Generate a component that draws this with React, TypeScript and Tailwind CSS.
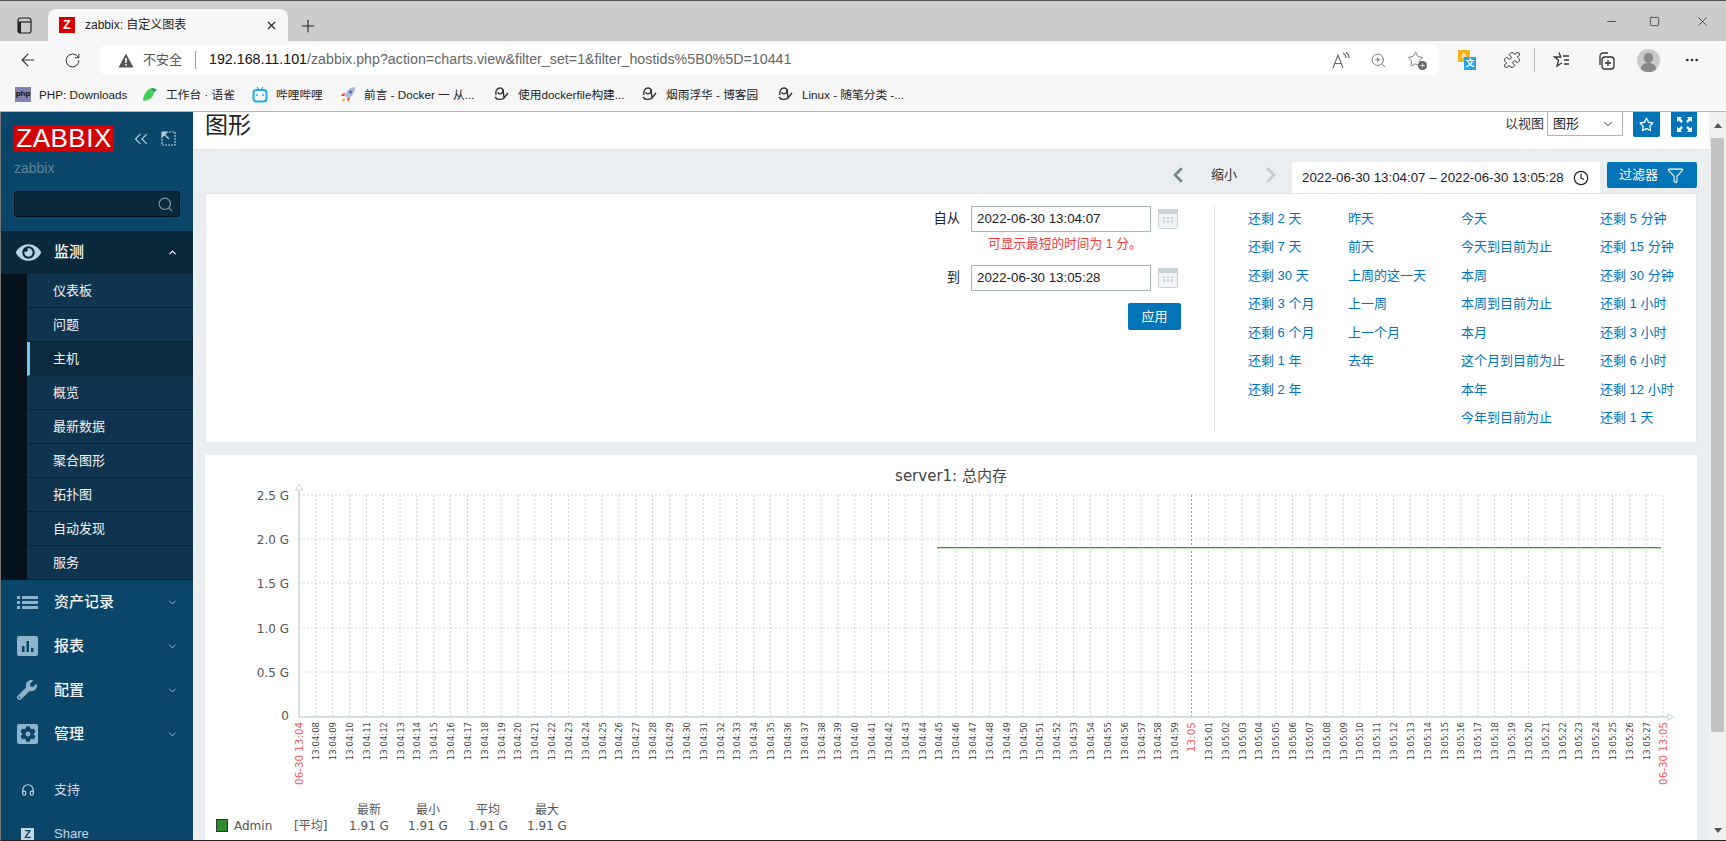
import React from "react";
import { FaEye, FaWrench, FaCog, FaRegStar } from "react-icons/fa";
import {
  ArrowLeft,
  RotateCw,
  Search,
  ChevronUp,
  ChevronDown,
  ChevronLeft,
  ChevronRight,
  ChevronsLeft,
  Headphones,
  Clock,
  Filter,
  Plus,
  X,
  Minus,
  Square,
  ZoomIn,
  MoreHorizontal,
  Puzzle,
  Star,
} from "lucide-react";

const uiFont = "font-['Liberation_Sans','Noto_Sans_CJK_SC',sans-serif]";

const subItems = ["仪表板", "问题", "主机", "概览", "最新数据", "聚合图形", "拓扑图", "自动发现", "服务"];

const linkColumns = [
  { width: "w-[100px]", links: ["还剩 2 天", "还剩 7 天", "还剩 30 天", "还剩 3 个月", "还剩 6 个月", "还剩 1 年", "还剩 2 年"] },
  { width: "w-[113px]", links: ["昨天", "前天", "上周的这一天", "上一周", "上一个月", "去年"] },
  { width: "w-[139px]", links: ["今天", "今天到目前为止", "本周", "本周到目前为止", "本月", "这个月到目前为止", "本年", "今年到目前为止"] },
  { width: "w-[90px]", links: ["还剩 5 分钟", "还剩 15 分钟", "还剩 30 分钟", "还剩 1 小时", "还剩 3 小时", "还剩 6 小时", "还剩 12 小时", "还剩 1 天"] },
];

const BlogIcon = () => (
  <svg width="16" height="16" viewBox="0 0 16 16" fill="none" stroke="#333" strokeWidth="1.400">
    <path d="M2 9C1 5 3 2 6 2c3 0 4 3 2 5-1.500 1.500-4 1-4-1" />
    <path d="M9 3l1 9 4-5" />
    <path d="M1 11c2 3 6 3 9 1" />
  </svg>
);

const Bookmark = ({ icon, label, className }: { icon: React.ReactNode; label: string; className: string }) => (
  <div className={`flex items-center shrink-0 ${className}`}>
    <span className="w-4 h-4 flex items-center justify-center shrink-0">{icon}</span>
    <span className="ml-2 text-[11.700px] text-[#222] whitespace-nowrap">{label}</span>
  </div>
);

const BrowserChrome = () => (
  <div className="shrink-0">
    {/* Tab strip */}
    <div className="h-[41px] bg-[#cccccc] border-t border-[#555] flex items-end relative">
      <div className="w-[48px] h-[31px] flex items-center justify-center">
        <svg width="15" height="17" viewBox="0 0 15 17" fill="none" stroke="#222" strokeWidth="1.2">
          <rect x="1" y="1" width="13" height="15" rx="2.5" />
          <path d="M1 5h13" />
          <path d="M1 5h3v11H1z" fill="#222" stroke="none" />
        </svg>
      </div>
      <div className="w-[240px] h-[32px] bg-[#f7f7f7] rounded-t-lg flex items-center pl-[11px] pr-[10px]">
        <span className="w-4 h-4 bg-[#d40000] text-white text-xs font-bold flex items-center justify-center">Z</span>
        <span className="ml-[10px] text-xs text-[#222] flex-1">zabbix: 自定义图表</span>
        <X size={13} className="text-[#222]" />
      </div>
      <div className="w-[40px] h-[31px] flex items-center justify-center">
        <Plus size={20} strokeWidth={1.3} className="text-[#222]" />
      </div>
      <div className="ml-auto h-[40px] flex items-center text-[#222]">
        <Minus size={13} strokeWidth={1.4} className="mr-[31px]" />
        <Square size={11} strokeWidth={1.5} className="mr-[35px]" />
        <X size={15} strokeWidth={1.2} className="mr-[16px]" />
      </div>
    </div>
    {/* Address bar */}
    <div className="h-[37px] bg-[#f7f7f7] flex items-start pt-1 text-[#333]">
      <ArrowLeft size={20} strokeWidth={1.4} className="ml-[18px] mt-[5px]" />
      <RotateCw size={17} strokeWidth={1.4} className="ml-[26px] mt-[7px]" />
      <div className="ml-[19px] w-[1339px] h-[30px] bg-white rounded-md flex items-center pl-[18px] pr-[13px]">
        <svg width="16" height="15" viewBox="0 0 16 15">
          <path d="M8 0.500 15.500 14.500H0.500Z" fill="#555" />
          <rect x="7.200" y="5" width="1.600" height="5" fill="#fff" />
          <rect x="7.200" y="11" width="1.600" height="1.600" fill="#fff" />
        </svg>
        <span className="ml-[9px] text-[13px] text-[#555]">不安全</span>
        <span className="ml-[13px] mr-[13px] w-px h-[18px] bg-[#999]" />
        <span className="text-[14.250px] whitespace-nowrap text-[#666]">
          <span className="text-[#111]">192.168.11.101</span>/zabbix.php?action=charts.view&amp;filter_set=1&amp;filter_hostids%5B0%5D=10441
        </span>
        <div className="ml-auto flex items-center text-[#666]">
          <svg width="18" height="17" viewBox="0 0 18 17" fill="none" stroke="currentColor" strokeWidth="1.100">
            <path d="M1 16 6 3l5 13M3 11.500h6M11 1c2 1 3 3 3 5M14 0c2 1.500 3 4 3 6" />
          </svg>
          <ZoomIn size={17} strokeWidth={1.2} className="ml-[20px]" />
          <span className="ml-[20px] relative w-[19px] h-[18px]">
            <Star size={17} strokeWidth={1.200} />
            <span className="absolute right-[-1px] bottom-[-1px] w-[9px] h-[9px] rounded-full bg-[#666] flex items-center justify-center text-white">
              <Plus size={7} strokeWidth={2.500} />
            </span>
          </span>
        </div>
      </div>
      <div className="flex items-center h-[30px] text-[#333]">
        <span className="ml-[19px] relative w-[18px] h-[20px]">
          <span className="absolute left-0 top-0 w-[12px] h-[12px] bg-[#f5b51e] text-white text-[8px] flex items-center justify-center">A</span>
          <span className="absolute right-0 bottom-0 w-[12px] h-[13px] bg-[#2aa3ee] text-white text-[9px] font-bold flex items-center justify-center">文</span>
        </span>
        <Puzzle size={18} strokeWidth={1.300} className="ml-[27px]" />
        <span className="ml-[13px] w-px h-[24px] bg-[#bbb]" />
        <svg className="ml-[17px]" width="18" height="18" viewBox="0 0 18 18" fill="none" stroke="#333" strokeWidth="1.300">
          <path d="M7 1.500 8.800 6H2.500l4 3.200L5 15l5-3.200M11 5h6M12 9h5M12 13h5" />
        </svg>
        <svg className="ml-[27px]" width="18" height="19" viewBox="0 0 18 19" fill="none" stroke="#333" strokeWidth="1.300">
          <rect x="5" y="6" width="12" height="12" rx="3" />
          <path d="M11 9v6M8 12h6M3 14V5a3 3 0 0 1 3-3h5" />
        </svg>
        <span className="ml-[22px] w-[23px] h-[23px] rounded-full bg-[#c9c9c9] overflow-hidden relative">
          <span className="absolute left-[7px] top-[4px] w-[9px] h-[10px] rounded-full bg-[#8a8a8a]" />
          <span className="absolute left-[4px] top-[14px] w-[15px] h-[12px] rounded-full bg-[#8a8a8a]" />
        </span>
        <MoreHorizontal size={16} className="ml-[24px]" />
      </div>
    </div>
    {/* Bookmarks */}
    <div className="h-[34px] bg-[#f7f7f7] border-b border-[#b9b9b9] flex items-center pl-[15px]">
      <Bookmark
        className="w-[127px]"
        label="PHP: Downloads"
        icon={<span className="w-4 h-[15px] bg-[#8183b5] text-[#111] text-[8px] font-bold flex items-center justify-center">php</span>}
      />
      <Bookmark
        className="w-[110px]"
        label="工作台 · 语雀"
        icon={
          <svg width="16" height="15" viewBox="0 0 16 15">
            <path d="M1 14C1 8 5 2 10 1c2 0 3 1 5 2l-3 2c0 5-5 9-11 9Z" fill="#45cc5a" />
            <path d="M10 1c2 0 3 1 5 2l-3 2c-1-1-2-2-2-4Z" fill="#1f9e62" />
          </svg>
        }
      />
      <Bookmark
        className="w-[88px]"
        label="哔哩哔哩"
        icon={
          <svg width="16" height="17" viewBox="0 0 16 17" fill="none" stroke="#23ade5" strokeWidth="2">
            <rect x="1.500" y="4" width="13" height="11.500" rx="3" />
            <path d="M5 1l2 3M11 1 9 4" strokeWidth="1.200" />
            <path d="M5 8v2M11 8v2" strokeWidth="1.500" />
          </svg>
        }
      />
      <Bookmark
        className="w-[154px]"
        label="前言 - Docker 一 从..."
        icon={
          <svg width="16" height="17" viewBox="0 0 16 17">
            <path d="M15 1c-5 0-9 4-10 9l2 2c5-1 8-5 8-11Z" fill="#a9b9dd" />
            <circle cx="10.500" cy="6" r="1.500" fill="#3b64b5" />
            <path d="M5 7 2 8 1 10h3.500ZM10 11l-.5 3-2 1.500V12Z" fill="#e0522f" />
            <path d="M4 12 1 16l4.500-2Z" fill="#f5a623" />
          </svg>
        }
      />
      <Bookmark className="w-[148px]" label="使用dockerfile构建..." icon={<BlogIcon />} />
      <Bookmark className="w-[136px]" label="烟雨浮华 - 博客园" icon={<BlogIcon />} />
      <Bookmark className="w-[140px]" label="Linux - 随笔分类 -..." icon={<BlogIcon />} />
    </div>
  </div>
);

const NavItem = ({ icon, label }: { icon: React.ReactNode; label: string }) => (
  <div className="h-[44px] shrink-0 flex items-center text-[#f2f2f2]">
    <span className="w-[53px] pl-[16px] flex items-center text-[#8fb3c9]">{icon}</span>
    <span className="text-[15px] font-medium flex-1">{label}</span>
    <ChevronDown size={11} strokeWidth={2} className="mr-[15px] text-[#a9c3d3]" />
  </div>
);

const Sidebar = () => (
  <div className="w-[192px] shrink-0 bg-[#0a466a] flex flex-col overflow-hidden">
    <div className="h-[119px] shrink-0 pl-[13px] pt-[13px]">
      <div className="flex items-center">
        <div className="w-[100px] h-[27px] bg-[#d40000] text-white text-[26px] leading-[27px] text-center tracking-[0.500px]">ZABBIX</div>
        <ChevronsLeft size={22} strokeWidth={1.300} className="ml-[16px] text-[#b8cdda]" />
        <svg className="ml-[9px]" width="15" height="15" viewBox="0 0 15 15" fill="none" stroke="#b8cdda" strokeWidth="1.200">
          <path d="M8 1h6v13H1V8" strokeDasharray="2 1" />
          <path d="M1 1h5L1 6Z" fill="#b8cdda" />
          <path d="M3 3l5 5" />
        </svg>
      </div>
      <div className="mt-[6px] text-[14px] leading-[20px] text-[#5d8299]">zabbix</div>
      <div className="mt-[13px] w-[166px] h-[26px] bg-[#0a2a3c] border border-[#04131c] rounded-[3px] flex items-center justify-end pr-[5px]">
        <Search size={17} strokeWidth={1.600} className="text-[#7d9aab]" />
      </div>
    </div>
    <div className="h-[43px] shrink-0 bg-[#0a2a3c] flex items-center text-white">
      <span className="w-[53px] pl-[15px] flex items-center text-[#b9d3e3]"><FaEye size={25} /></span>
      <span className="text-[15px] font-medium flex-1">监测</span>
      <ChevronUp size={11} strokeWidth={2.400} className="mr-[15px]" />
    </div>
    <div className="flex shrink-0 bg-[#06131c] pl-[26px]">
      <div className="flex-1">
        {subItems.map((item) => (
          <div
            key={item}
            className={`h-[34px] flex items-center pl-[26px] text-[13px] text-[#f2f2f2] border-b border-[#0a2335] ${
              item === "主机" ? "bg-[#0a2a3e] border-l-[3px] border-l-[#7cc4f2] !pl-[23px]" : "bg-[#0e3450]"
            }`}
          >
            {item}
          </div>
        ))}
      </div>
    </div>
    <NavItem label="资产记录" icon={<svg width="21" height="13" viewBox="0 0 21 13" fill="currentColor"><path d="M0 0h3v3H0zM5 0h16v3H5zM0 5h3v3H0zM5 5h16v3H5zM0 10h3v3H0zM5 10h16v3H5z" /></svg>} />
    <NavItem
      label="报表"
      icon={
        <svg width="21" height="20" viewBox="0 0 21 20">
          <rect width="21" height="20" rx="2" fill="currentColor" />
          <path d="M5 10h2.500v6H5zM9.500 5H12v11H9.500zM14 12h2.500v4H14z" fill="#0a466a" />
        </svg>
      }
    />
    <NavItem label="配置" icon={<FaWrench size={20} />} />
    <NavItem
      label="管理"
      icon={
        <span className="w-[21px] h-[20px] rounded-[2px] bg-[#8fb3c9] flex items-center justify-center text-[#0a466a]">
          <FaCog size={16} />
        </span>
      }
    />
    <div className="h-[12px] shrink-0" />
    <div className="h-[44px] shrink-0 flex items-center text-[#c4d6e1]">
      <span className="w-[53px] pl-[20px]"><Headphones size={14} strokeWidth={2} /></span>
      <span className="text-[13px]">支持</span>
    </div>
    <div className="h-[44px] shrink-0 flex items-center text-[#c4d6e1]">
      <span className="w-[53px] pl-[20px]">
        <span className="w-[13px] h-[13px] bg-[#c4d6e1] text-[#0a466a] text-[11px] font-bold flex items-center justify-center">Z</span>
      </span>
      <span className="text-[13px]">Share</span>
    </div>
  </div>
);

const Chart = () => {
  const left = 299;
  const right = 1663;
  const zero = 717;
  const perSecond = 16.840;
  const ticks = Array.from({ length: 80 }, (_, i) => i + 1);
  const yTicks = [
    { y: 495, label: "2.5 G" },
    { y: 539, label: "2.0 G" },
    { y: 583, label: "1.5 G" },
    { y: 628, label: "1.0 G" },
    { y: 672, label: "0.5 G" },
  ];
  const tickLabel = (s: number) => {
    const total = 4 * 60 + 7 + s;
    return `13:0${Math.floor(total / 60)}:${String(total % 60).padStart(2, "0")}`;
  };
  return (
    <svg viewBox="205 455 1491 386" width="1491" height="386" className="block" fontFamily="'DejaVu Sans','Noto Sans CJK SC',sans-serif">
      <text x="951" y="481" textAnchor="middle" fontSize="15" fill="#444">server1: 总内存</text>
      {yTicks.map((t) => (
        <g key={t.y}>
          <line x1={left} x2={right} y1={t.y} y2={t.y} stroke="#c8d2d8" strokeDasharray="1.500 2.500" />
          <text x="289" y={t.y + 4.500} textAnchor="end" fontSize="12" fill="#555">{t.label}</text>
        </g>
      ))}
      <text x="289" y={zero + 3} textAnchor="end" fontSize="12" fill="#555">0</text>
      {ticks.map((s) => {
        const x = left + s * perSecond;
        const minute = s === 53;
        return (
          <g key={s}>
            <line x1={x} x2={x} y1="495" y2={zero} stroke={minute ? "#8d9aa0" : "#c8d2d8"} strokeDasharray="2 2" />
            <text
              transform={`translate(${x + 3.500} 722) rotate(-90)`}
              textAnchor="end"
              fontSize={minute ? 10.500 : 8.500}
              fill={minute ? "#f05a5a" : "#444"}
            >
              {minute ? "13:05" : tickLabel(s)}
            </text>
          </g>
        );
      })}
      <line x1={right} x2={right} y1="495" y2={zero} stroke="#c8d2d8" strokeDasharray="2 2" />
      <line x1={left} x2={left} y1="490" y2={zero} stroke="#c9d3da" strokeWidth="1.500" />
      <line x1={left} x2="1668" y1={zero} y2={zero} stroke="#c9d3da" strokeWidth="1.500" />
      <path d="M295.500 490 299 484 302.500 490Z" fill="#fff" stroke="#c9d3da" />
      <path d="M1668 713.500 1673 717 1668 720.500Z" fill="#fff" stroke="#c9d3da" />
      <line x1="937" x2="1661" y1="547.500" y2="547.500" stroke="#4c8a4c" />
      <line x1="937" x2="1661" y1="548.500" y2="548.500" stroke="#c2e3b8" />
      <text transform={`translate(${left + 3.500} 722) rotate(-90)`} textAnchor="end" fontSize="10.300" fill="#f05a5a">06-30 13:04</text>
      <text transform={`translate(${right + 3.500} 722) rotate(-90)`} textAnchor="end" fontSize="10.300" fill="#f05a5a">06-30 13:05</text>
      {/* Legend */}
      <rect x="216.500" y="819.500" width="11" height="12" fill="#2e8b2e" stroke="#333" />
      <text x="234" y="830" fontSize="12" fill="#555">Admin</text>
      <text x="294" y="830" fontSize="12" fill="#555">[平均]</text>
      {[
        { x: 369, head: "最新" },
        { x: 428, head: "最小" },
        { x: 488, head: "平均" },
        { x: 547, head: "最大" },
      ].map((c) => (
        <g key={c.head} textAnchor="middle" fontSize="12" fill="#555">
          <text x={c.x} y="814">{c.head}</text>
          <text x={c.x} y="830">1.91 G</text>
        </g>
      ))}
    </svg>
  );
};

const CalendarIcon = () => (
  <svg className="ml-[7px]" width="20" height="20" viewBox="0 0 20 20">
    <rect x="0.500" y="0.500" width="19" height="19" rx="1" fill="#f1f3f4" stroke="#c9d2d7" />
    <rect x="0" y="0" width="20" height="5" fill="#c9d2d7" />
    <path d="M5 8h2v2H5zM9 8h2v2H9zM13 8h2v2h-2zM5 11.500h2v2H5zM9 11.500h2v2H9zM13 11.500h2v2h-2z" fill="#c9d2d7" />
  </svg>
);

const FilterPanel = () => (
  <div className="h-[250px] bg-white border border-[#e3e7ea] flex pt-[12px]">
    <div className="w-[1009px] h-[226px] border-r border-[#dfe3e6] text-[13.300px] flex flex-col items-end shrink-0 pr-[33px]">
      <div className="flex items-center mr-[3px]">
        <span className="mr-[11px] text-[#222]">自从</span>
        <div className="w-[180px] h-[26px] border border-[#a9b6bf] flex items-center pl-[5px] text-[#222]">2022-06-30 13:04:07</div>
        <CalendarIcon />
      </div>
      <div className="mr-[39px] mt-[3px] h-[21px] w-[154px] text-[#f03c3c] text-[12.700px] whitespace-nowrap">可显示最短的时间为 1 分。</div>
      <div className="mt-[9px] flex items-center mr-[3px]">
        <span className="mr-[11px] text-[#222]">到</span>
        <div className="w-[180px] h-[26px] border border-[#a9b6bf] flex items-center pl-[5px] text-[#222]">2022-06-30 13:05:28</div>
        <CalendarIcon />
      </div>
      <button className="mt-[12px] w-[53px] h-[27px] bg-[#0275b8] rounded-[2px] text-white text-[13px]">应用</button>
    </div>
    <div className="flex pl-[33px] mt-[-2px]">
      {linkColumns.map((col, i) => (
        <div key={i} className={col.width}>
          {col.links.map((link) => (
            <div key={link} className="h-[28.500px] flex items-center text-[13px] text-[#0275b8] whitespace-nowrap">{link}</div>
          ))}
        </div>
      ))}
    </div>
  </div>
);

const MainContent = () => (
  <div className="flex-1 bg-[#ebeef0] flex flex-col overflow-hidden">
    <div className="h-[38px] shrink-0 bg-white border-b border-[#e3e7ea] flex items-start pl-[12px] pr-[12px]">
      <h1 className="text-[23px] leading-[26px] text-[#222]">图形</h1>
      <div className="ml-auto flex items-start">
        <span className="text-[13px] leading-[24px] text-[#333] mr-[3px]">以视图</span>
        <div className="w-[76px] h-[24px] border border-[#a9b6bf] border-t-0 bg-white flex items-center justify-between pl-[5px] pr-[7px] text-[13px] text-[#222]">
          图形
          <ChevronDown size={14} strokeWidth={1.400} />
        </div>
        <div className="ml-[10px] w-[27px] h-[25px] bg-[#0275b8] rounded-b-[2px] flex items-center justify-center text-white"><FaRegStar size={15} /></div>
        <div className="ml-[11px] w-[26px] h-[25px] bg-[#0275b8] rounded-b-[2px] flex items-center justify-center text-white">
          <svg width="17" height="17" viewBox="0 0 17 17" fill="#fff">
            <path d="M1 1h5L4.500 2.800 7 5.300 5.300 7 2.800 4.500 1 6ZM16 1v5l-1.800-1.500L11.700 7 10 5.300l2.500-2.500L11 1ZM1 16v-5l1.800 1.500L5.300 10 7 11.700l-2.500 2.500L6 16ZM16 16h-5l1.500-1.800L10 11.700 11.700 10l2.500 2.500L16 11Z" />
          </svg>
        </div>
      </div>
    </div>
    <div className="h-[43px] shrink-0 flex items-end justify-end pr-[12px]">
      <div className="flex items-center h-[26px] mb-[5px] text-[13px] text-[#333]">
        <ChevronLeft size={24} strokeWidth={2.800} className="text-[#73878f]" />
        <span className="ml-[21px] mr-[22px]">缩小</span>
        <ChevronRight size={24} strokeWidth={2.800} className="text-[#c3ced3]" />
      </div>
      <div className="ml-[9px] w-[308px] h-[31px] bg-white flex items-center pl-[10px] text-[13.300px] text-[#222] whitespace-nowrap">
        2022-06-30 13:04:07 – 2022-06-30 13:05:28
        <Clock size={16} strokeWidth={1.800} className="ml-[9px]" />
      </div>
      <div className="ml-[7px] w-[90px] h-[26px] mb-[5px] bg-[#0275b8] rounded-[2px] flex items-center text-white text-[13px] pl-[12px]">
        过滤器
        <Filter size={17} strokeWidth={1.500} className="ml-[9px]" />
      </div>
    </div>
    <div className="px-[12px] flex flex-col gap-[12px]">
      <FilterPanel />
      <div className="bg-white h-[386px] overflow-hidden"><Chart /></div>
    </div>
  </div>
);

const Scrollbar = () => (
  <div className="w-[17px] shrink-0 bg-[#f0f0f0] flex flex-col items-center">
    <div className="h-[26px] shrink-0 flex items-center justify-center">
      <span className="border-x-[4px] border-x-transparent border-b-[5px] border-b-[#555]" />
    </div>
    <div className="w-[13px] h-[594px] bg-[#c2c2c2]" />
    <div className="mt-auto h-[20px] flex items-center justify-center">
      <span className="border-x-[4px] border-x-transparent border-t-[5px] border-t-[#555]" />
    </div>
  </div>
);

export default function App() {
  return (
    <div className={`w-[1726px] h-[841px] flex flex-col overflow-hidden bg-white ${uiFont}`}>
      <BrowserChrome />
      <div className="flex-1 flex min-h-0 border-l border-[#777] border-b border-b-[#222]">
        <Sidebar />
        <MainContent />
        <Scrollbar />
      </div>
    </div>
  );
}
